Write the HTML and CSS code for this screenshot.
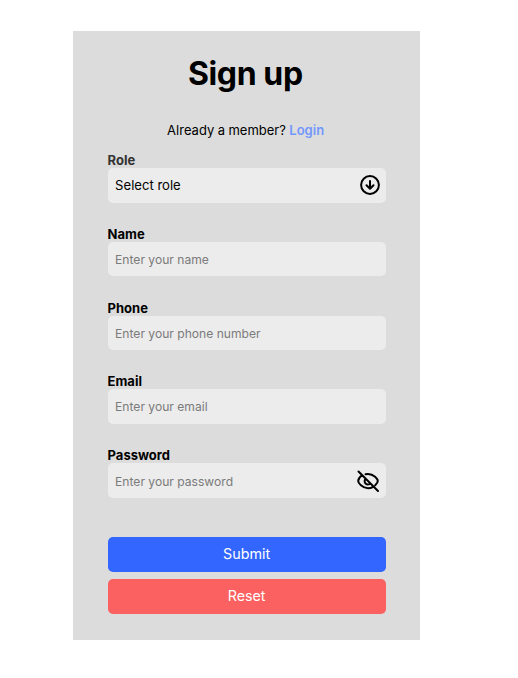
FILE: index.html
```html
<!DOCTYPE html>
<html lang="en">
<head>
<meta charset="utf-8">
<title>Sign up</title>
<link rel="stylesheet" href="styles.css">
</head>
<body>
<main class="card">
  <h1>Sign up</h1>
  <p class="member">Already a member? <a class="login">Login</a></p>
  <form>
    <div class="field">
      <label class="role-label">Role</label>
      <div class="control select"><span>Select role</span>
        <svg class="arrow" viewBox="0 0 20 20"><circle cx="10" cy="10" r="8.9"/><path d="M10 6v7.500M6.500 10.200 10 13.700l3.500-3.500"/></svg>
      </div>
    </div>
    <div class="field">
      <label>Name</label>
      <div class="control">Enter your name</div>
    </div>
    <div class="field">
      <label>Phone</label>
      <div class="control">Enter your phone number</div>
    </div>
    <div class="field">
      <label>Email</label>
      <div class="control email">Enter your email</div>
    </div>
    <div class="field last">
      <label>Password</label>
      <div class="control"><span>Enter your password</span>
        <svg class="eye" viewBox="0 0 24 24"><path d="M2.500 2.500l19.500 19.500M6 6.200C3.500 8 2.200 10.700 2.200 12c0 2 4 7.200 9.800 7.200 2 0 3.800-.6 5.200-1.400M9.500 5.200A11 11 0 0 1 12 4.900c5.800 0 9.800 5 9.800 7.100 0 1-1 2.800-2.600 4.300M9.800 9.800a3.200 3.200 0 1 0 4.500 4.500"/></svg>
      </div>
    </div>
    <div class="actions">
      <button class="submit" type="button">Submit</button>
      <button class="reset" type="button">Reset</button>
    </div>
  </form>
</main>
</body>
</html>
```
FILE: styles.css
```css
* { box-sizing: border-box; }
body { margin: 0; background: #fff; color: #000; font-family: Inter, sans-serif; }
.card { width: 347.500px; height: 608.200px; margin: 31.400px 0 0 72.600px; padding: 23px 35px 0; background: #dcdcdc; }
h1 { margin: 0 2px 0 0; font-size: 32px; line-height: 40px; font-weight: 700; letter-spacing: -.4px; text-align: center; }
.member { margin: 25.300px 1.500px 0 0; font-size: 13px; line-height: 20px; text-align: center; word-spacing: -.2px; }
.login { color: #7397ff; font-weight: 600; }
form { margin-top: 13.300px; }
.field { height: 73.800px; }
.field.last { height: 69.300px; }
label { display: block; height: 15px; font-size: 13px; line-height: 14.600px; font-weight: 700; }
.role-label { color: #333; }
.control { display: flex; align-items: center; justify-content: space-between; width: 278px; height: 34.700px; padding: 1px 6px 0 7.500px; border-radius: 5px; background: #ececec; color: #7b7b7b; font-size: 12.100px; }
.email { padding-top: 0; }
.select { padding-top: 0; color: #000; font-size: 13.100px; }
svg { fill: none; stroke: #000; stroke-width: 2; stroke-linecap: round; stroke-linejoin: round; }
.arrow { width: 20px; height: 20px; }
.eye { width: 24px; height: 24px; }
.actions { display: grid; gap: 7px; width: 278px; margin-top: 20px; }
button { height: 34.700px; padding: 0 0 2px; border: 0; border-radius: 5px; color: #fff; font: 400 14.300px Inter, sans-serif; }
.submit { background: #3366ff; }
.reset { background: #fc6161; }
```
